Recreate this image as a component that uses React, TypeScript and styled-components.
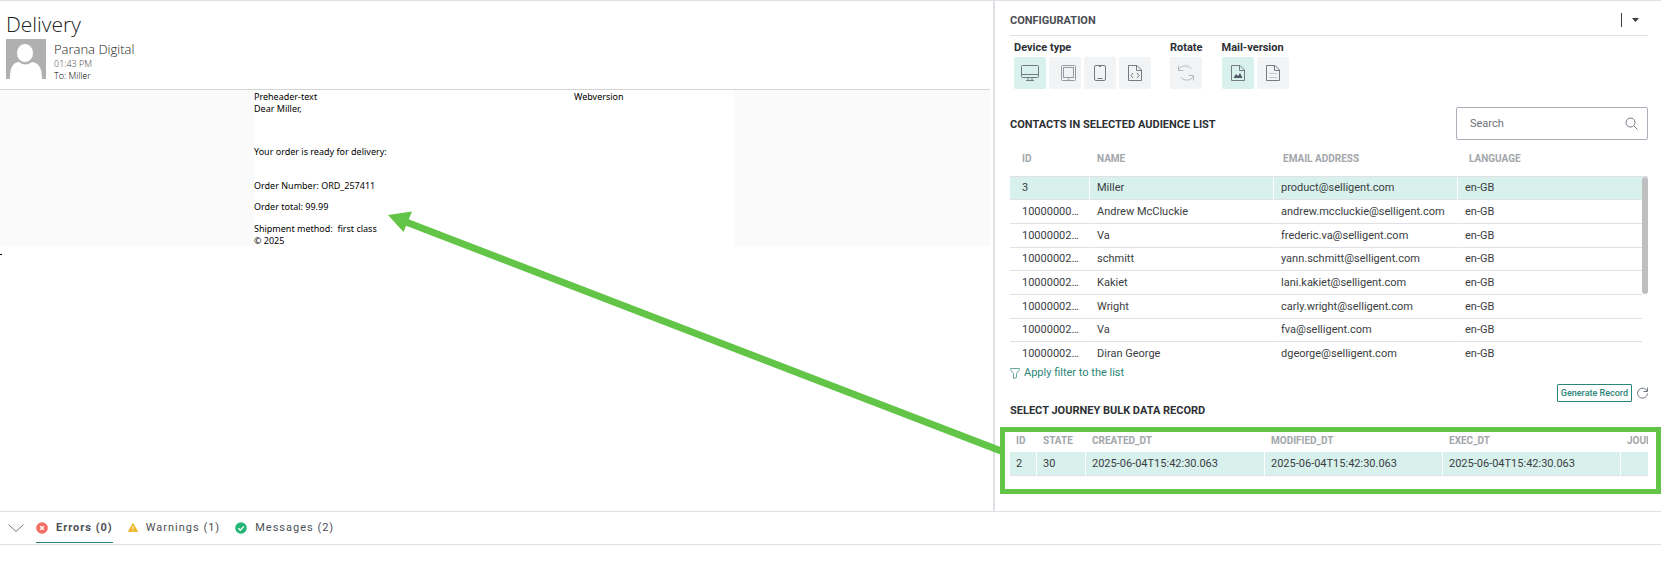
import React from 'react';
import styled, { createGlobalStyle } from 'styled-components';

const line = '#dee1e6';
const mint = '#d8f1ec';
const teal = '#2b8577';
const accent = '#62c548';

const GlobalStyle = createGlobalStyle`
  *, *::before, *::after { box-sizing: border-box; }
  body { margin: 0; background: #fff; font-family: Roboto, "Liberation Sans", sans-serif; font-size: 11px; color: #3a3d42; }
  button, input { font: inherit; color: inherit; }
  h1, h2, h3, p { margin: 0; }
`;

const Page = styled.div`
  position: relative;
  border-top: 1px solid ${line};
`;

const Main = styled.main`
  display: grid;
  grid-template-columns: minmax(0, 3fr) minmax(0, 2fr);
  border-bottom: 1px solid ${line};
  @media (min-width: 1200px) {
    grid-template-columns: minmax(0, 1fr) 668px;
  }
`;

const Preview = styled.section`
  padding-right: 3px;
`;

const MailHeader = styled.header`
  height: 89px;
  padding: 9px 6px 0;
  border-bottom: 1px solid #d4d4d4;
  font-family: "Open Sans", "Noto Sans", sans-serif;
  font-weight: 300;
  color: #222;
`;

const Subject = styled.h1`
  font-size: 21px;
  line-height: 29px;
  font-weight: 300;
`;

const Sender = styled.div`
  display: flex;
  gap: 8px;
`;

const SenderText = styled.div`
  padding-top: 1px;
`;

const SenderName = styled.div`
  font-size: 13px;
  line-height: 18px;
`;

const SenderMeta = styled.div<{ $muted?: boolean }>`
  font-size: 9px;
  line-height: 12px;
  color: ${p => (p.$muted ? '#444' : '#000')};
`;

const MailBody = styled.div`
  display: flex;
  justify-content: center;
  padding-right: 2px;
  background: #fafafa;
`;

const MailSheet = styled.article`
  flex: 0 1 480px;
  height: 156px;
  padding-top: 1px;
  background: #fff;
  color: #000;
  font-family: "Noto Sans", "Open Sans", sans-serif;
  font-size: 9px;
  line-height: 12px;
`;

const MailTop = styled.div`
  display: grid;
  grid-template-columns: 2fr 1fr;
`;

const MailLine = styled.p<{ $before?: number }>`
  margin-top: ${p => p.$before ?? 0}px;
  white-space: pre;
`;

const Footmark = styled.div`
  width: 2px;
  height: 1px;
  margin-top: 8px;
  background: #000;
`;

const Panel = styled.aside`
  border-left: 2px solid ${line};
  padding: 0 13px 17px 15px;
`;

const PanelHead = styled.div`
  display: flex;
  align-items: center;
  justify-content: space-between;
  height: 35px;
  padding: 4px 9px 0 0;
  border-bottom: 1px solid ${line};
`;

const PanelTitle = styled.h2`
  font-size: 11px;
  font-weight: 700;
  color: #4a4d52;
`;

const MenuButton = styled.button`
  display: flex;
  align-items: center;
  height: 14px;
  padding: 0 0 0 10px;
  border: 0;
  border-left: 1px solid #3a3d42;
  background: none;
`;

const Tools = styled.div`
  display: flex;
  gap: 19px;
  padding: 5px 4px 0;
`;

const ToolGroup = styled.div`
  h3 {
    font-size: 11px;
    line-height: 14px;
    font-weight: 700;
    color: #2d3035;
    margin-bottom: 2px;
  }
`;

const ToolRow = styled.div`
  display: flex;
  gap: 3px;
`;

const ToolButton = styled.button<{ $active?: boolean }>`
  display: grid;
  place-items: center;
  width: 32px;
  height: 32px;
  padding: 0;
  border: 0;
  border-radius: 2px;
  background: ${p => (p.$active ? mint : '#f2f3f5')};
`;

const ContactsHead = styled.div`
  display: flex;
  align-items: center;
  justify-content: space-between;
  margin-top: 18px;
`;

const SectionTitle = styled.h2`
  padding-top: 2px;
  font-size: 11px;
  line-height: 14px;
  font-weight: 700;
  color: #2d3035;
`;

const SearchBox = styled.label`
  display: flex;
  align-items: center;
  width: 192px;
  height: 33px;
  padding: 0 9px 0 13px;
  border: 1px solid #a9b0ba;
  border-radius: 2px;
  input {
    flex: 1;
    min-width: 0;
    padding: 0;
    border: 0;
    outline: 0;
    background: none;
  }
  input::placeholder { color: #6d7278; opacity: 1; }
`;

const Scroller = styled.div`
  position: relative;
`;

const ScrollThumb = styled.div`
  position: absolute;
  top: 37px;
  right: 0;
  width: 6px;
  height: 117px;
  border-radius: 3px;
  background: #bfbfbf;
`;

const Table = styled.table`
  display: block;
  thead, tbody { display: block; }
  tr { display: grid; }
  th {
    padding: 0;
    text-align: left;
    font-size: 10px;
    font-weight: 700;
    color: #a3a6aa;
  }
  td {
    padding: 0 0 0 7px;
    border-right: 1px solid #fff;
    border-bottom: 1px solid ${line};
    white-space: nowrap;
    overflow: hidden;
    text-overflow: ellipsis;
  }
`;

const ContactTable = styled(Table)`
  tr { grid-template-columns: 80px repeat(3, minmax(0, 1fr)); }
  thead tr { height: 37px; line-height: 38px; border-bottom: 1px solid ${line}; }
  th { padding-left: 7px; }
  th:first-child { padding-left: 12px; }
  tbody { padding-right: 6px; }
  tbody tr { height: 24px; line-height: 23px; }
  tbody tr:nth-child(3n + 1) { height: 23px; line-height: 22px; }
  tbody tr:last-child td { border-bottom: 0; }
  td:first-child { padding: 0 8px 0 12px; }
  td:last-child { border-right: 0; }
`;

const ContactRow = styled.tr<{ $selected?: boolean }>`
  background: ${p => (p.$selected ? mint : 'none')};
`;

const FilterLink = styled.a`
  display: flex;
  align-items: center;
  gap: 4px;
  width: max-content;
  line-height: 14px;
  color: ${teal};
  text-decoration: none;
`;

const RecordActions = styled.div`
  display: flex;
  align-items: center;
  justify-content: flex-end;
  gap: 5px;
  margin-top: 4px;
`;

const GenerateButton = styled.button`
  height: 18px;
  padding: 0 3px;
  border: 1px solid ${teal};
  border-radius: 1px;
  background: #fff;
  color: ${teal};
  font-size: 9px;
  font-weight: 500;
`;

const IconButton = styled.button`
  display: grid;
  padding: 0;
  border: 0;
  background: none;
`;

const RecordFrame = styled.div`
  margin: 9px -13px 0 -10px;
  padding: 0 8px 13px 5px;
  border: 5px solid ${accent};
`;

const RecordTable = styled(Table)`
  overflow: hidden;
  tr { grid-template-columns: 27px 49px 179px 178px 178px 110px; }
  thead tr { height: 20px; line-height: 18px; }
  th { padding-left: 6px; }
  td { padding-left: 6px; }
  tbody tr { height: 24px; line-height: 23px; background: ${mint}; }
`;

const ArrowLayer = styled.svg`
  position: absolute;
  top: -1px;
  right: 661px;
  pointer-events: none;
`;

const StatusBar = styled.footer`
  display: flex;
  align-items: stretch;
  height: 33px;
  padding-left: 8px;
  border-bottom: 1px solid ${line};
`;

const Collapse = styled(IconButton)`
  align-content: center;
  margin-right: 12px;
`;

const StatusTab = styled.button<{ $active?: boolean }>`
  display: flex;
  align-items: center;
  gap: 8px;
  height: 31px;
  margin-right: 15px;
  padding: 1px 0 0;
  border: 0;
  border-bottom: 1px solid ${p => (p.$active ? teal : 'transparent')};
  background: none;
  letter-spacing: 1px;
  font-weight: ${p => (p.$active ? 700 : 400)};
  color: #4c4f54;
`;

const iconProps = { fill: 'none', stroke: '#747a84', strokeWidth: 1 } as const;

const Monitor = () => (
  <svg width="18" height="18" viewBox="0 0 18 18" {...iconProps}>
    <rect x=".5" y="1.5" width="17" height="12" rx="1" />
    <path d="M.5 10.5h17M7 13.5v3M11 13.5v3M5 16.5h8" />
  </svg>
);
const Tablet = () => (
  <svg width="22" height="18" viewBox="0 0 22 18" {...iconProps} stroke="#969ba3">
    <rect x="7.500" y="1.500" width="14" height="15" rx="1" />
    <rect x="9.500" y="3.500" width="10" height="10" />
    <path d="M13.500 15h2" />
  </svg>
);
const Phone = () => (
  <svg width="18" height="18" viewBox="0 0 18 18" {...iconProps}>
    <rect x="3.500" y="1.500" width="11" height="15" rx="1.500" />
    <path d="M6.500 14.500h5M8 2.500h2" />
  </svg>
);
const PageIcon = ({ children }: { children?: React.ReactNode }) => (
  <svg width="18" height="18" viewBox="0 0 18 18" {...iconProps}>
    <path d="M2.500 1.500h8.500l4.500 4.500v10.500h-13zM10.500 1.500v5h5" />
    {children}
  </svg>
);
const Rotate = () => (
  <svg width="18" height="18" viewBox="0 0 18 18" {...iconProps} stroke="#b5b9bf">
    <path d="M1.500 1.500v5h5M1.500 6C4 1 11 .5 14.500 5M16.500 16.500v-5h-5M16.500 12C14 17 7 17.500 3.500 13" />
  </svg>
);

const contacts = [
  ['3', 'Miller', 'product@selligent.com'],
  ['100000001001', 'Andrew McCluckie', 'andrew.mccluckie@selligent.com'],
  ['100000021002', 'Va', 'frederic.va@selligent.com'],
  ['100000021003', 'schmitt', 'yann.schmitt@selligent.com'],
  ['100000021004', 'Kakiet', 'lani.kakiet@selligent.com'],
  ['100000021005', 'Wright', 'carly.wright@selligent.com'],
  ['100000021006', 'Va', 'fva@selligent.com'],
  ['100000021007', 'Diran George', 'dgeorge@selligent.com'],
];

const stamp = '2025-06-04T15:42:30.063';

export default function App() {
  return (
    <Page>
      <GlobalStyle />
      <Main>
        <Preview>
          <MailHeader>
            <Subject>Delivery</Subject>
            <Sender>
              <svg width="40" height="40" viewBox="0 0 40 40">
                <path fill="#b0b0b0" d="M0 0h40v40H0z" />
                <path fill="#fff" d="M4 40C4 29 6 24 13 23q6 5 13 0C33 24 36 29 36 40z" />
                <ellipse cx="19" cy="14" rx="8.500" ry="9.500" fill="#fff" stroke="#b0b0b0" />
              </svg>
              <SenderText>
                <SenderName>Parana Digital</SenderName>
                <SenderMeta $muted>01:43 PM</SenderMeta>
                <SenderMeta>To: Miller</SenderMeta>
              </SenderText>
            </Sender>
          </MailHeader>
          <MailBody>
            <MailSheet>
              <MailTop>
                <span>Preheader-text</span>
                <span>Webversion</span>
              </MailTop>
              <MailLine>Dear Miller,</MailLine>
              <MailLine $before={31}>Your order is ready for delivery:</MailLine>
              <MailLine $before={22}>Order Number: ORD_257411</MailLine>
              <MailLine $before={9}>Order total: 99.99</MailLine>
              <MailLine $before={10}>{'Shipment method:  first class'}</MailLine>
              <MailLine>© 2025</MailLine>
            </MailSheet>
          </MailBody>
          <Footmark />
        </Preview>

        <Panel>
          <PanelHead>
            <PanelTitle>CONFIGURATION</PanelTitle>
            <MenuButton aria-label="Panel menu">
              <svg width="7" height="4" viewBox="0 0 7 4"><path d="M0 0h7L3.500 4z" fill="#3a3d42" /></svg>
            </MenuButton>
          </PanelHead>

          <Tools>
            <ToolGroup>
              <h3>Device type</h3>
              <ToolRow>
                <ToolButton $active aria-label="Desktop"><Monitor /></ToolButton>
                <ToolButton aria-label="Tablet"><Tablet /></ToolButton>
                <ToolButton aria-label="Phone"><Phone /></ToolButton>
                <ToolButton aria-label="Source">
                  <PageIcon><path d="M7 9l-2 2.500L7 14M11 9l2 2.500L11 14" /></PageIcon>
                </ToolButton>
              </ToolRow>
            </ToolGroup>
            <ToolGroup>
              <h3>Rotate</h3>
              <ToolRow><ToolButton aria-label="Rotate"><Rotate /></ToolButton></ToolRow>
            </ToolGroup>
            <ToolGroup>
              <h3>Mail-version</h3>
              <ToolRow>
                <ToolButton $active aria-label="HTML version">
                  <PageIcon><path d="M4.500 14l2.500-4 2 2 2-3 2.500 5z" fill="#4f5a66" stroke="none" /></PageIcon>
                </ToolButton>
                <ToolButton aria-label="Text version">
                  <PageIcon><path d="M5 9.500h8M5 13.500h8" stroke="#c3c7cc" /></PageIcon>
                </ToolButton>
              </ToolRow>
            </ToolGroup>
          </Tools>

          <ContactsHead>
            <SectionTitle>CONTACTS IN SELECTED AUDIENCE LIST</SectionTitle>
            <SearchBox>
              <input type="search" placeholder="Search" aria-label="Search contacts" />
              <svg width="13" height="13" viewBox="0 0 13 13" {...iconProps}>
                <circle cx="5.500" cy="5.500" r="4.500" />
                <path d="M9 9l3.500 3.500" />
              </svg>
            </SearchBox>
          </ContactsHead>

          <Scroller>
            <ContactTable>
              <thead>
                <tr><th>ID</th><th>NAME</th><th>EMAIL ADDRESS</th><th>LANGUAGE</th></tr>
              </thead>
              <tbody>
                {contacts.map(([id, name, email], i) => (
                  <ContactRow key={id} $selected={i === 0}>
                    <td>{id}</td><td>{name}</td><td>{email}</td><td>en-GB</td>
                  </ContactRow>
                ))}
              </tbody>
            </ContactTable>
            <ScrollThumb />
          </Scroller>

          <FilterLink href="#filter">
            <svg width="10" height="11" viewBox="0 0 10 11" fill="none" stroke="#6aa69d">
              <path d="M.5.500h9v1L6.500 5.500v4l-3 1v-5L.5 1.500z" />
            </svg>
            Apply filter to the list
          </FilterLink>

          <RecordActions>
            <GenerateButton>Generate Record</GenerateButton>
            <IconButton aria-label="Refresh">
              <svg width="11" height="12" viewBox="0 0 11 12" {...iconProps}>
                <path d="M10 4A5 5 0 1 0 10.500 6.500M10.500.500v4h-4" />
              </svg>
            </IconButton>
          </RecordActions>
          <SectionTitle>SELECT JOURNEY BULK DATA RECORD</SectionTitle>
          <RecordFrame>
            <RecordTable>
              <thead>
                <tr>
                  <th>ID</th><th>STATE</th><th>CREATED_DT</th><th>MODIFIED_DT</th><th>EXEC_DT</th><th>JOURNEY</th>
                </tr>
              </thead>
              <tbody>
                <tr><td>2</td><td>30</td><td>{stamp}</td><td>{stamp}</td><td>{stamp}</td><td /></tr>
              </tbody>
            </RecordTable>
          </RecordFrame>
        </Panel>
      </Main>

      <StatusBar>
        <Collapse aria-label="Collapse">
          <svg width="16" height="9" viewBox="0 0 16 9" {...iconProps}><path d="M.5.500L8 7.500 15.500.500" /></svg>
        </Collapse>
        <StatusTab $active>
          <svg width="12" height="12" viewBox="0 0 12 12">
            <circle cx="6" cy="6" r="5.800" fill="#f36c5f" />
            <path d="M4 4l4 4M8 4L4 8" stroke="#fff" strokeWidth="1.400" />
          </svg>
          Errors (0)
        </StatusTab>
        <StatusTab>
          <svg width="10" height="9" viewBox="0 0 10 9">
            <path d="M5 .3L9.800 8.700H.2z" fill="#eeb422" stroke="#eeb422" strokeWidth=".6" strokeLinejoin="round" />
            <path d="M5 3v3M5 6.800v1" stroke="#fff" />
          </svg>
          Warnings (1)
        </StatusTab>
        <StatusTab>
          <svg width="12" height="12" viewBox="0 0 12 12">
            <circle cx="6" cy="6" r="5.800" fill="#22b573" />
            <path d="M3.300 6.200l2 2 3.500-3.800" fill="none" stroke="#fff" strokeWidth="1.400" />
          </svg>
          Messages (2)
        </StatusTab>
      </StatusBar>

      <ArrowLayer width="612" height="460" viewBox="388 0 612 460">
        <path d="M406 222L1001 451" stroke={accent} strokeWidth="7" />
        <path d="M388 215L412 211.500 403.500 232z" fill={accent} />
      </ArrowLayer>
    </Page>
  );
}
